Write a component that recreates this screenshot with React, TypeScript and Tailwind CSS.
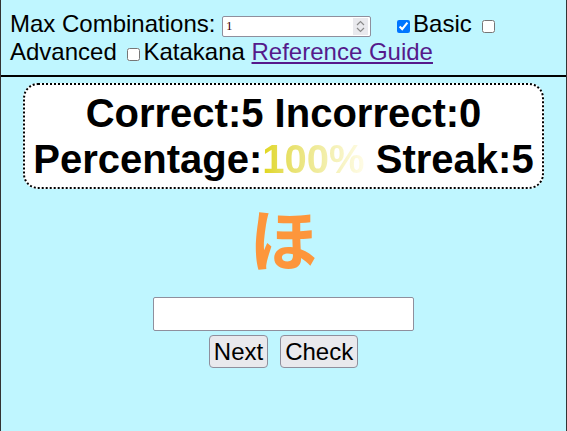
import React, { useState } from 'react';

export default function App() {
  const [maxCombos, setMaxCombos] = useState('1');
  const [basic, setBasic] = useState(true);
  const [advanced, setAdvanced] = useState(false);
  const [katakana, setKatakana] = useState(false);
  const [answer, setAnswer] = useState('');

  // stats shown in the score card
  const correct = 5;
  const incorrect = 0;
  const streak = 5;
  const percentage = Math.round((correct / Math.max(1, correct + incorrect)) * 100);

  return (
    <div className="min-h-screen bg-[#bff6ff] border-x border-[#333] font-['Liberation_Sans',Arial,sans-serif] text-black">
      {/* settings */}
      <div className="pt-[10px] pl-[9px] pr-[40px] pb-[9px] text-[24px] leading-[28px] border-b-2 border-black">
        Max Combinations:{' '}
        <span className="relative inline-block align-[2px] w-[149px] h-[21px]">
          <input
            type="number"
            min={1}
            value={maxCombos}
            onChange={e => setMaxCombos(e.target.value)}
            className="block w-full h-full bg-white border border-[#8f8f9d] rounded-[2px] pl-[3px] pr-[22px] text-[13px] leading-none text-[#3b0000] font-['Liberation_Serif',serif] [appearance:textfield] [&::-webkit-inner-spin-button]:appearance-none [&::-webkit-outer-spin-button]:appearance-none"
          />
          {/* spinner */}
          <span className="pointer-events-none absolute right-[3px] top-[2px] bottom-[2px] w-[15px] bg-[#e9e9ed] flex flex-col items-center justify-center gap-[1px]">
            <svg width="9" height="6" viewBox="0 0 9 6" fill="none" stroke="#8a8a8a" strokeWidth="1.2">
              <path d="M1 5 L4.5 1.5 L8 5" />
            </svg>
            <svg width="9" height="6" viewBox="0 0 9 6" fill="none" stroke="#8a8a8a" strokeWidth="1.2">
              <path d="M1 1 L4.5 4.5 L8 1" />
            </svg>
          </span>
        </span>
        <input
          type="checkbox"
          checked={basic}
          onChange={e => setBasic(e.target.checked)}
          className="ml-[26px] mr-[3px] align-[-1px]"
        />
        Basic{' '}
        <input
          type="checkbox"
          checked={advanced}
          onChange={e => setAdvanced(e.target.checked)}
          className="ml-[4px] mr-[3px] align-[-1px]"
        />{' '}
        Advanced{' '}
        <input
          type="checkbox"
          checked={katakana}
          onChange={e => setKatakana(e.target.checked)}
          className="ml-[4px] mr-[3px] align-[-1px]"
        />
        Katakana{' '}
        <a href="#" className="text-[#551a8b] underline">
          Reference Guide
        </a>
      </div>

      {/* score card */}
      <div className="mx-[22px] mt-[6px] bg-white border-2 border-dotted border-black rounded-[15px] py-[5px] text-center font-bold text-[40px] leading-[46px]">
        <div>
          Correct:{correct} Incorrect:{incorrect}
        </div>
        <div>
          Percentage:
          <span className="bg-gradient-to-r from-[#e0d600] to-[#fffce8] bg-clip-text text-transparent">
            {percentage}%
          </span>{' '}
          Streak:{streak}
        </div>
      </div>

      {/* current kana */}
      <div className="mt-[8px] text-center text-[68px] leading-[80px] font-bold text-[#fd963c] font-['Noto_Sans_CJK_JP','Noto_Sans_CJK_SC',sans-serif]">
        ほ
      </div>

      {/* answer */}
      <div className="mt-[20px] flex flex-col items-center">
        <input
          type="text"
          value={answer}
          onChange={e => setAnswer(e.target.value)}
          className="w-[261px] h-[34px] bg-white border border-[#8f8f9d] rounded-[2px] px-2 text-[20px]"
        />
        <div className="mt-[4px] flex gap-[12px] text-[24px] leading-[27px]">
          <button className="bg-[#e9e9ed] border border-[#8f8f9d] rounded-[4px] px-[4px] py-[2px]">Next</button>
          <button className="bg-[#e9e9ed] border border-[#8f8f9d] rounded-[4px] px-[4px] py-[2px]">Check</button>
        </div>
      </div>
    </div>
  );
}
